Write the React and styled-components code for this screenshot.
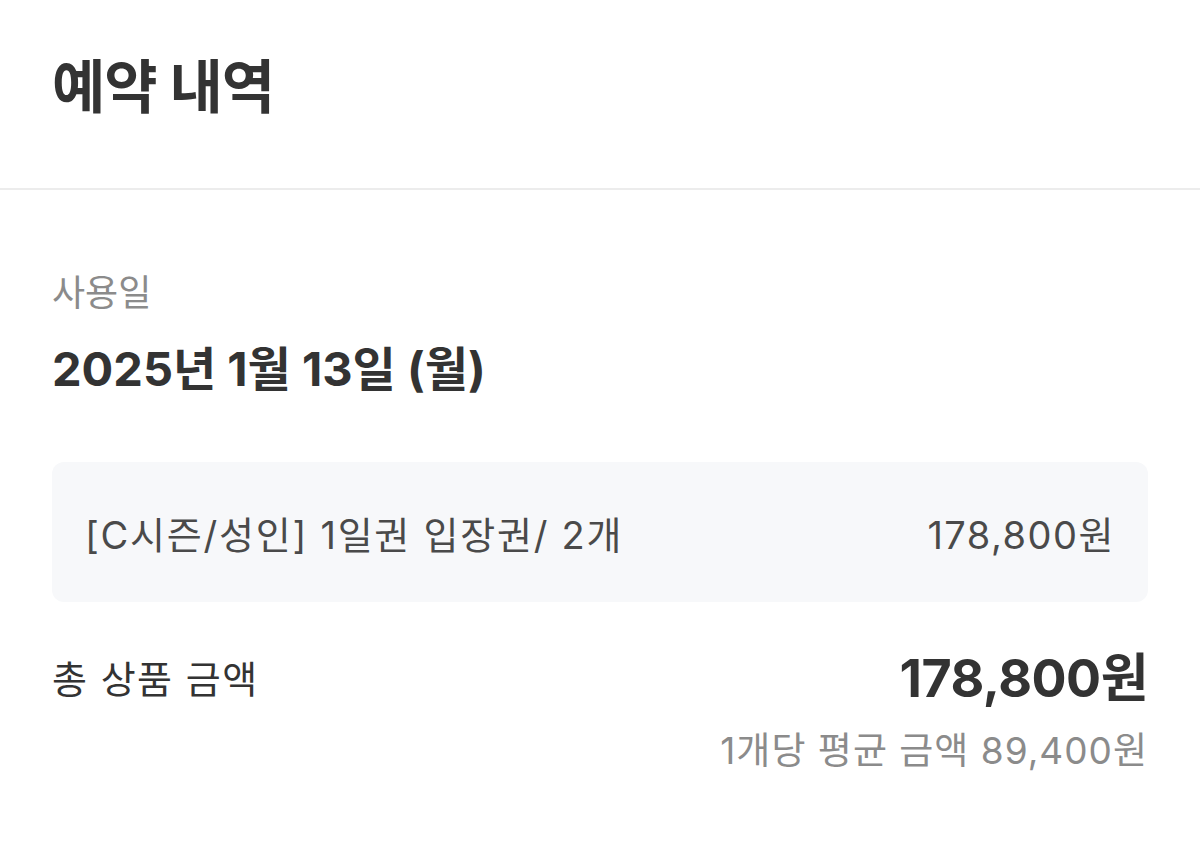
import React from "react";
import styled, { createGlobalStyle } from "styled-components";

const GlobalStyle = createGlobalStyle`
  body {
    margin: 0;
    background: #ffffff;
    font-family: "Inter", "Noto Sans CJK KR", sans-serif;
    color: #333333;
  }
`;

const Page = styled.div`
  width: 1200px;
  min-height: 852px;
  background: #ffffff;
`;

const Header = styled.header`
  height: 188px;
  padding: 0 52px;
  display: flex;
  align-items: flex-start;
  border-bottom: 2px solid #ececec;
`;

const Title = styled.h1`
  margin: 50px 0 0;
  font-size: 58px;
  font-weight: 700;
  line-height: 75px;
  color: #333333;
  letter-spacing: -1px;
`;

const Body = styled.section`
  padding: 79px 52px 0;
  display: flex;
  flex-direction: column;
`;

const Label = styled.div`
  font-size: 36px;
  line-height: 48px;
  color: #8b8b8b;
`;

const DateText = styled.div`
  margin-top: 22px;
  font-size: 47px;
  font-weight: 700;
  line-height: 60px;
  color: #333333;
`;

const ItemBox = styled.div`
  margin-top: 63px;
  height: 140px;
  padding: 0 33px;
  background: #f7f8fa;
  border-radius: 12px;
  display: flex;
  align-items: center;
  justify-content: space-between;
  font-size: 38px;
  color: #4a4a4a;
`;

const ItemText = styled.span`
  letter-spacing: ${(p) => p.$spacing || 0}px;
`;

const TotalRow = styled.div`
  margin-top: 45px;
  display: flex;
  justify-content: space-between;
  align-items: flex-start;
`;

const TotalLabel = styled.div`
  font-size: 38px;
  line-height: 64px;
  color: #333333;
  letter-spacing: 1.5px;
`;

const Amounts = styled.div`
  display: flex;
  flex-direction: column;
  align-items: flex-end;
`;

const TotalValue = styled.div`
  font-size: 52px;
  font-weight: 700;
  line-height: 64px;
  color: #333333;
  letter-spacing: -0.5px;
`;

const Average = styled.div`
  margin-top: 16px;
  font-size: 37px;
  line-height: 48px;
  color: #8b8b8b;
  letter-spacing: 1px;
`;

export default function App() {
  return (
    <Page>
      <GlobalStyle />
      <Header>
        <Title>예약 내역</Title>
      </Header>
      <Body>
        <Label>사용일</Label>
        <DateText>2025년 1월 13일 (월)</DateText>
        <ItemBox>
          <ItemText $spacing={1.75}>[C시즌/성인] 1일권 입장권/ 2개</ItemText>
          <ItemText $spacing={1.5}>178,800원</ItemText>
        </ItemBox>
        <TotalRow>
          <TotalLabel>총 상품 금액</TotalLabel>
          <Amounts>
            <TotalValue>178,800원</TotalValue>
            <Average>1개당 평균 금액 89,400원</Average>
          </Amounts>
        </TotalRow>
      </Body>
    </Page>
  );
}
